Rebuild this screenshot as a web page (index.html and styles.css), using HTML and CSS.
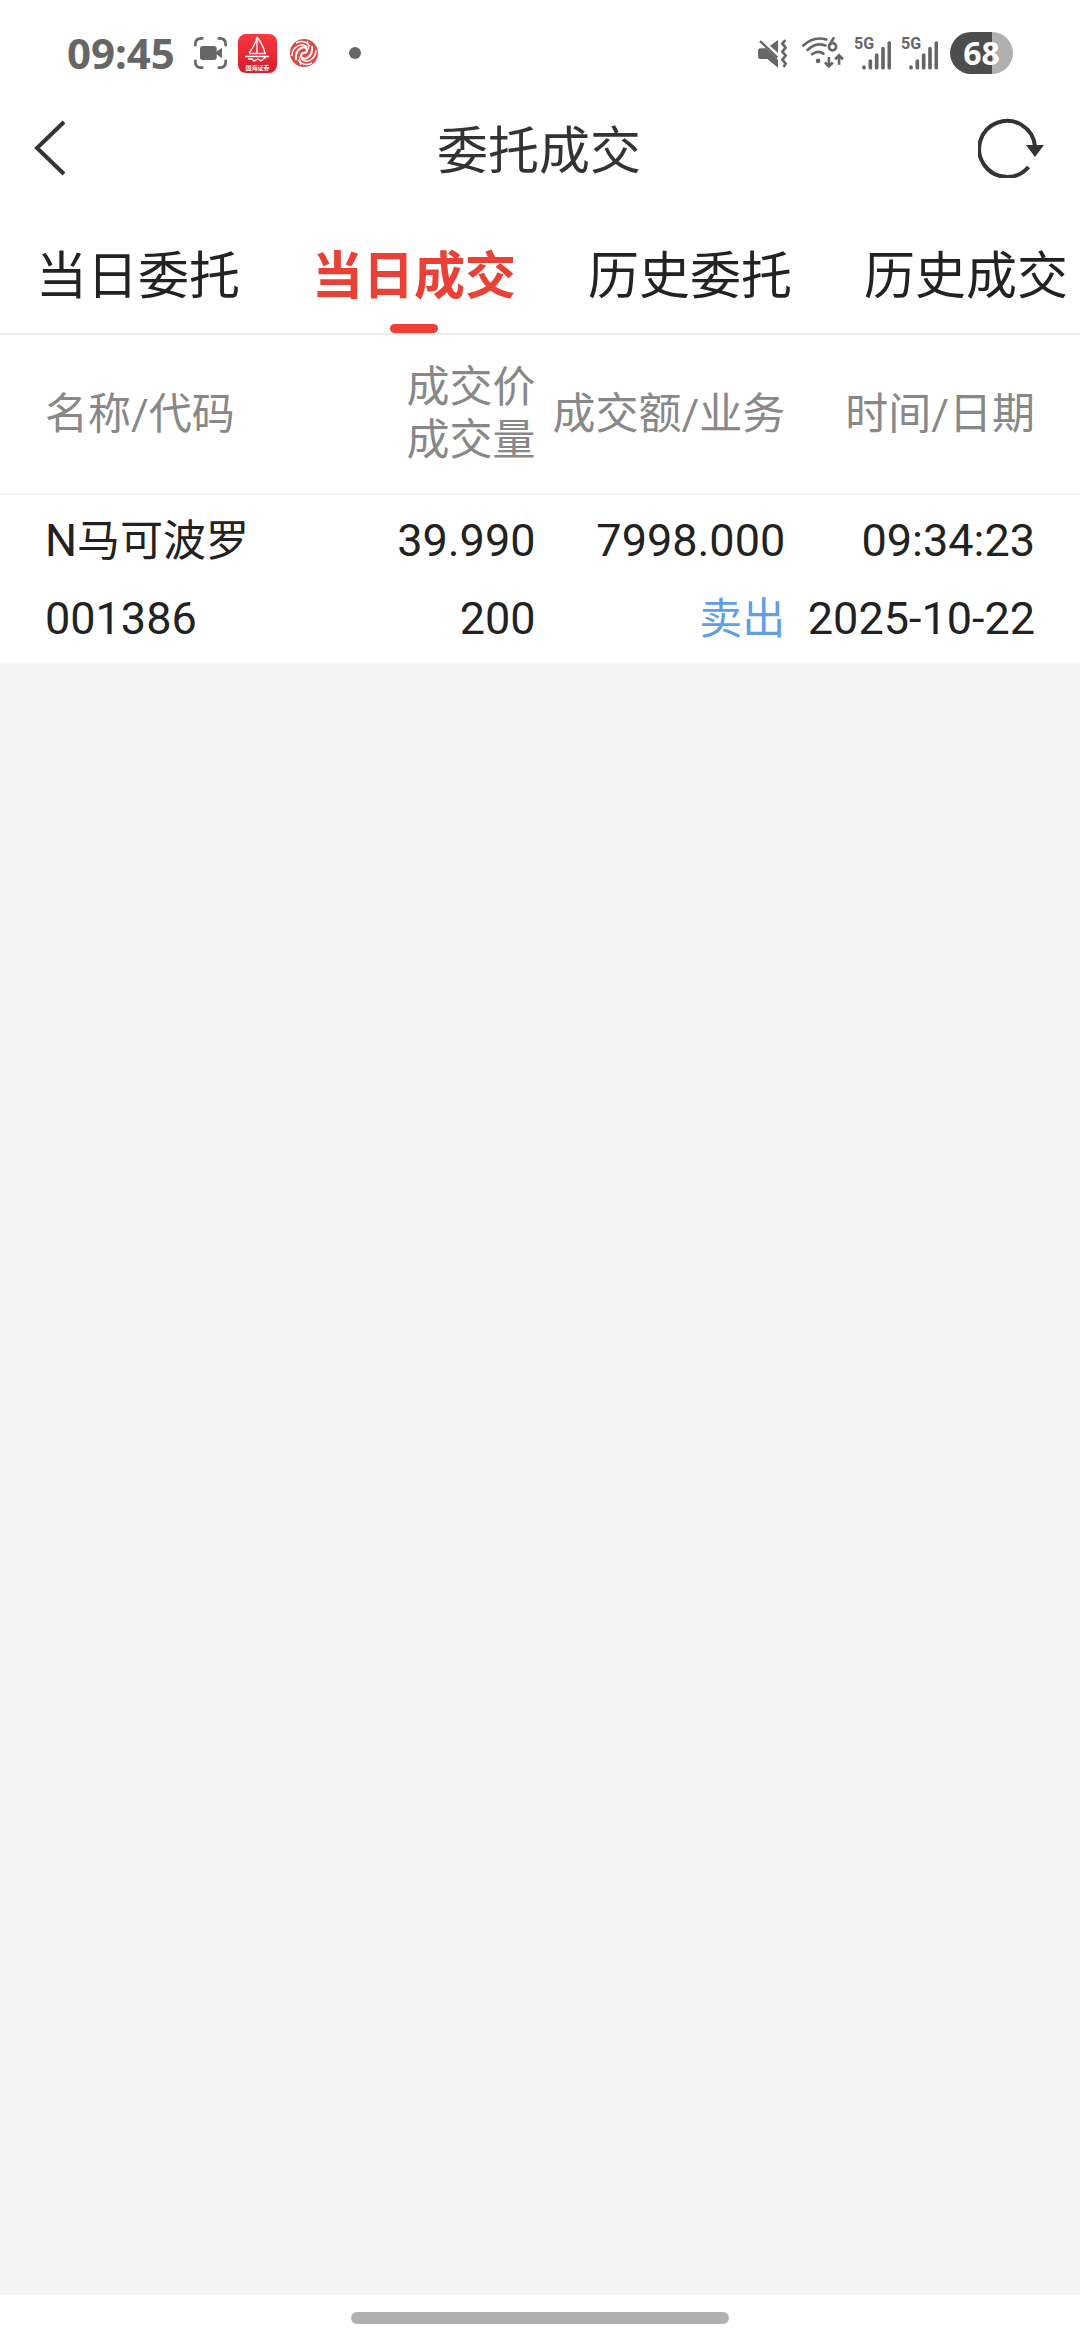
FILE: index.html
```html
<!DOCTYPE html>
<html lang="zh-CN">
<head>
<meta charset="utf-8">
<meta name="viewport" content="width=device-width, initial-scale=1">
<title>委托成交</title>
<link rel="stylesheet" href="styles.css">
</head>
<body>
<div class="status">
  <div class="status-left">
    <time class="clock">09:45</time>
    <svg class="rec" viewBox="0 0 99 96" width="33" height="32" aria-hidden="true">
      <path d="M4 28V22Q4 4 22 4H28M71 4H77Q95 4 95 22V28M95 68V74Q95 92 77 92H71M28 92H22Q4 92 4 74V68" fill="none" stroke="#666" stroke-width="8"/>
      <rect x="18" y="27" width="50" height="42" rx="8" fill="#666"/>
      <path d="M62 48 84 32V64Z" fill="#666"/>
    </svg>
    <svg class="app" viewBox="0 0 39 39" width="39" height="39" aria-hidden="true">
      <defs><linearGradient id="app-red" x1="0" y1="0" x2="0" y2="1"><stop offset="0" stop-color="#f63a40"/><stop offset="1" stop-color="#d91a2c"/></linearGradient></defs>
      <rect width="39" height="39" rx="8" fill="url(#app-red)"/>
      <path d="M19 3V20M19 3Q17 12 11 19M19 3Q25 11 27 19M11 19.500H28M7 22.500H31M10 25H14L16 27 20 25 23 27 28 23" fill="none" stroke="#fff" stroke-width="1.3"/>
      <text x="19.5" y="35.5" text-anchor="middle" class="app-name">国海证券</text>
    </svg>
    <svg class="swirl" viewBox="0 0 30 30" width="30" height="30" aria-hidden="true">
      <circle cx="15" cy="15" r="14" fill="#e2494a"/>
      <g fill="none" stroke="#fff">
        <g id="arms">
          <path d="M15 15Q18 15 18 12Q17 8 12 10Q6 13 7 22" stroke-width="2"/>
          <path d="M18 9Q12 4 6 10Q3 13 3 18" stroke-width="1.4"/>
          <path d="M21 8Q15 1 7 5" stroke-width="1.4"/>
          <path d="M12 17Q9 21 12 27" stroke-width="1.2"/>
        </g>
        <use href="#arms" transform="rotate(180 15 15)"/>
      </g>
    </svg>
    <span class="dot"></span>
  </div>
  <div class="status-right">
    <svg class="mute" viewBox="0 0 87 87" width="29" height="29" aria-hidden="true">
      <path d="M0 34Q0 28 8 28H24L60 62V86L28 60H8Q0 60 0 54ZM36 20 60 3V42Z" fill="#666"/>
      <path d="M6 6 58 56" stroke="#666" stroke-width="7"/>
      <path d="M82 3 73 14 83 26 73 38 83 50 73 62 83 74 77 84" fill="none" stroke="#666" stroke-width="8" stroke-linejoin="round"/>
    </svg>
    <svg class="wifi" viewBox="0 0 128 96" width="42" height="32" aria-hidden="true">
      <g fill="none" stroke="#666" stroke-width="8" stroke-linecap="round">
        <path d="M4 25Q36-4 74 7M17 39Q42 14 71 25M31 52Q49 38 65 50"/>
        <path d="M82 60V88M70 77 82 89 94 77M113 84V56M101 67 113 55 125 67" stroke-linecap="butt"/>
        <circle cx="93" cy="29" r="11"/><path d="M83 25 96 3"/>
      </g>
      <circle cx="49" cy="72" r="7" fill="#666"/>
    </svg>
    <span class="signal"><span class="net">5G</span>
      <svg viewBox="0 0 87 87" width="29" height="29" aria-hidden="true"><path d="M6 78V80M25 60V80M44 42V80M63 23V80M82 6V80" stroke="#666" stroke-width="11" stroke-linecap="round"/></svg>
    </span>
    <span class="signal"><span class="net">5G</span>
      <svg viewBox="0 0 87 87" width="29" height="29" aria-hidden="true"><path d="M6 78V80M25 60V80M44 42V80M63 23V80M82 6V80" stroke="#666" stroke-width="11" stroke-linecap="round"/></svg>
    </span>
    <span class="battery">68</span>
  </div>
</div>
<header class="bar">
  <button class="icon-btn" type="button" aria-label="返回">
    <svg viewBox="0 0 32 56" width="32" height="56"><path d="M30 2 3 28 30 54" fill="none" stroke="#333" stroke-width="4"/></svg>
  </button>
  <h1 class="title">委托成交</h1>
  <button class="icon-btn" type="button" aria-label="刷新">
    <svg viewBox="0 0 66 60" width="66" height="60"><path d="M57 28A28 28 0 1 0 50.500 49" fill="none" stroke="#333" stroke-width="4"/><path d="M48 27H66L57 39Z" fill="#333"/></svg>
  </button>
</header>
<nav class="tabs" role="tablist">
  <button class="tab" type="button" role="tab">当日委托</button>
  <button class="tab active" type="button" role="tab" aria-selected="true">当日成交</button>
  <button class="tab" type="button" role="tab">历史委托</button>
  <button class="tab" type="button" role="tab">历史成交</button>
</nav>
<main class="content">
  <table class="deals">
    <thead>
      <tr><th>名称/代码</th><th>成交价<br>成交量</th><th>成交额/业务</th><th>时间/日期</th></tr>
    </thead>
    <tbody>
      <tr>
        <td>N<span class="cjk">马可波罗</span><br>001386</td>
        <td>39.990<br>200</td>
        <td>7998.000<br><span class="cjk sell">卖出</span></td>
        <td>09:34:23<br>2025-10-22</td>
      </tr>
    </tbody>
  </table>
</main>
<footer class="home"><span class="home-bar"></span></footer>
</body>
</html>
```

FILE: styles.css
```css
* { box-sizing: border-box; }
body {
  margin: 0;
  min-height: 100vh;
  display: flex;
  flex-direction: column;
  background: #fff;
  color: #222;
  font-family: Roboto, "Noto Sans CJK SC", sans-serif;
}
svg { display: block; }
button { border: 0; padding: 0; background: none; font: inherit; color: inherit; }

.status {
  height: 106px;
  padding: 0 67px;
  display: flex;
  justify-content: space-between;
  align-items: center;
  color: #666;
}
.status-left, .status-right { display: flex; align-items: center; }
.clock {
  width: 127px;
  font: 700 42px/56px "Noto Sans", sans-serif;
}
.app { margin-left: 11px; }
.app-name { font: 700 6px "Noto Sans CJK SC", sans-serif; fill: #fff; }
.swirl { margin-left: 12px; }
.dot { width: 12px; height: 12px; margin-left: 30px; border-radius: 50%; background: #666; }
.wifi { margin-left: 15px; }
.signal {
  position: relative;
  width: 37px;
  height: 34px;
  margin-left: 10px;
  display: flex;
  justify-content: flex-end;
  align-items: flex-end;
}
.net { position: absolute; left: 0; top: 0; font: 700 16px/16px Roboto, sans-serif; }
.battery {
  width: 63px;
  height: 42px;
  margin-left: 12px;
  border-radius: 21px;
  background: linear-gradient(to right, #4d4d4d 67%, #b0b0b0 67%);
  color: #fff;
  font: 700 32px/42px "Noto Sans", sans-serif;
  text-align: center;
}

.bar {
  height: 84px;
  padding: 0 36px 0 34px;
  display: grid;
  grid-template-columns: 1fr auto 1fr;
  align-items: center;
}
.icon-btn:last-child { justify-self: end; }
.icon-btn:first-child { justify-self: start; }
.title {
  margin: 0;
  padding-top: 8px;
  font-size: 51px;
  line-height: 72px;
  font-weight: 400;
  color: #333;
}

.tabs {
  display: flex;
  height: 145px;
  flex-shrink: 0;
  border-bottom: 2px solid #ededed;
  overflow: hidden;
}
.tab {
  flex: 0 0 276px;
  display: flex;
  flex-direction: column;
  align-items: center;
  justify-content: flex-end;
  font-size: 51px;
  line-height: 72px;
}
.tab::after { content: ""; width: 48px; height: 9px; margin-top: 11px; border-radius: 5px; }
.active { color: #ea4136; font-weight: 700; }
.active::after { background: #ef4035; }

.content { flex: 1; background: #f4f4f4; }
.deals, .deals thead, .deals tbody { display: block; background: #fff; }
.deals tr {
  display: grid;
  grid-template-columns: repeat(4, 1fr);
  align-items: center;
  padding: 0 45px 0 36px;
}
.deals th, .deals td { padding: 0; text-align: right; white-space: nowrap; }
.deals th:first-child, .deals td:first-child { padding-left: 9px; text-align: left; }
.deals thead tr { height: 160px; border-bottom: 2px solid #f4f4f4; }
.deals th { font-weight: 400; font-size: 43px; line-height: 53px; color: #888; }
.deals tbody tr { padding-top: 7px; padding-bottom: 5px; }
.deals td { font-size: 45px; line-height: 78px; }
.cjk { font-size: 43px; }
.sell { color: #5f9fe6; }

.home { height: 45px; display: flex; justify-content: center; align-items: center; }
.home-bar { width: 35%; height: 12px; border-radius: 6px; background: #b0b0b0; }
```
